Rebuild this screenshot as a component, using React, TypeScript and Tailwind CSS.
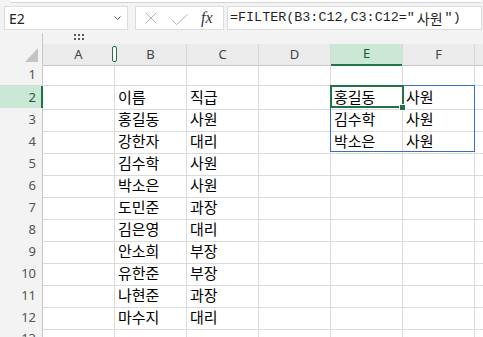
import React from 'react';

const COLUMNS = ['A', 'B', 'C', 'D', 'E', 'F'];

// B/C source table, E/F spilled FILTER result
const sheet: Record<number, Record<string, string>> = {
    2: { B: '이름', C: '직급', E: '홍길동', F: '사원' },
    3: { B: '홍길동', C: '사원', E: '김수학', F: '사원' },
    4: { B: '강한자', C: '대리', E: '박소은', F: '사원' },
    5: { B: '김수학', C: '사원' },
    6: { B: '박소은', C: '사원' },
    7: { B: '도민준', C: '과장' },
    8: { B: '김은영', C: '대리' },
    9: { B: '안소희', C: '부장' },
    10: { B: '유한준', C: '부장' },
    11: { B: '나현준', C: '과장' },
    12: { B: '마수지', C: '대리' },
};

const uiFont = "font-['Noto_Sans','Open_Sans',sans-serif]";
const cellFont = "font-['Noto_Sans_CJK_KR','Noto_Sans',sans-serif]";

const FormulaBar: React.FC = () => (
    <div className="h-[44px] bg-[#f3f3f3] flex flex-col">
        <div className="ml-[10px] mr-[2px] h-[3px] bg-white border-b border-[#d4d4d4] rounded-bl-[4px]" />
        <div className="mt-[3px] h-[24px] flex">
            <div className={`ml-[4px] w-[124px] bg-white border border-[#dcdcdc] flex items-center justify-between pl-[4px] pr-[6px] text-[14px] text-[#222] ${uiFont}`}>
                <span>E2</span>
                <svg width="7" height="4" viewBox="0 0 7 4" fill="none" stroke="#555" strokeWidth="1">
                    <path d="M0.5 0.5 L3.5 3.5 L6.5 0.5" />
                </svg>
            </div>
            <div className="ml-[7px] w-[89px] bg-white border border-[#dcdcdc] flex items-center">
                <svg className="ml-[9px]" width="12" height="12" viewBox="0 0 12 12" stroke="#b4b4b4" strokeWidth="1">
                    <path d="M0.5 0.5 L11.5 11.5 M11.5 0.5 L0.5 11.5" />
                </svg>
                <svg className="ml-[14px] mt-[2px]" width="17" height="11" viewBox="0 0 17 11" fill="none" stroke="#b4b4b4" strokeWidth="1">
                    <path d="M0.5 5.5 L5.5 10.5 L16.5 0.5" />
                </svg>
                <span className="ml-[13px] text-[16px] italic text-[#333] font-['Liberation_Serif',serif] leading-none">fx</span>
            </div>
            <div className="ml-[3px] flex-1 mr-[1px] bg-white border border-[#dcdcdc] flex items-center pl-[2px] text-[13.4px] text-[#1f1f1f] font-['Liberation_Mono','Noto_Sans_CJK_KR',monospace] whitespace-nowrap overflow-hidden">
                =FILTER(B3:C12,C3:C12="<span className="px-[2px] text-[14px] font-['Noto_Sans_CJK_KR',sans-serif]">사원</span>")
            </div>
        </div>
        <div className="flex flex-1">
            <div className="w-[43px] mt-[3px] border-r border-[#c8c8c8]" />
            <div className="ml-[31px] mt-[4px] grid grid-cols-3 gap-[2px] h-[6px]">
                {Array.from({ length: 6 }).map((_, i) => (
                    <span key={i} className="w-[2px] h-[2px] bg-[#5a5a5a]" />
                ))}
            </div>
        </div>
    </div>
);

const ColumnHeaders: React.FC = () => (
    <div className={`grid grid-cols-[43px_repeat(6,72px)_1fr] h-[20px] text-[13px] ${uiFont}`}>
        <div className="bg-[#f3f3f3] border-r border-b border-[#c8c8c8] flex items-end justify-end pr-[3px] pb-[3px]">
            <svg width="14" height="14" viewBox="0 0 14 14">
                <path d="M13 0 L13 14 L0 14 Z" fill="#c4c4c4" />
            </svg>
        </div>
        {COLUMNS.map(c => (
            <div
                key={c}
                className={c === 'E'
                    ? 'bg-[#cae8d5] border-r border-[#d8d8d8] border-b-2 border-b-[#217346] flex items-center justify-center text-[#185c37]'
                    : 'bg-[#ebebeb] border-r border-[#d8d8d8] border-b border-b-[#c8c8c8] flex items-center justify-center text-[#444]'}
            >
                {c}
            </div>
        ))}
        <div className="bg-[#ebebeb] border-b border-[#c8c8c8]" />
    </div>
);

const App: React.FC = () => {
    const rows = Array.from({ length: 13 }, (_, i) => i + 1);

    return (
        <div className="w-[483px] h-[337px] overflow-hidden bg-white relative">
            <FormulaBar />
            <ColumnHeaders />
            <div className="relative">
                {rows.map(r => (
                    <div key={r} className="grid grid-cols-[43px_repeat(6,72px)_1fr] h-[22px]">
                        <div
                            className={r === 2
                                ? `bg-[#cae8d5] border-b border-[#d8d8d8] border-r-2 border-r-[#217346] flex items-center justify-end pr-[5px] text-[13px] text-[#185c37] ${uiFont}`
                                : `bg-[#f3f3f3] border-b border-[#d8d8d8] border-r border-r-[#c8c8c8] flex items-center justify-end pr-[6px] text-[13px] text-[#555] ${uiFont}`}
                        >
                            {r}
                        </div>
                        {COLUMNS.map(c => (
                            <div key={c} className={`border-r border-b border-[#dadada] flex items-center pl-[3px] text-[15px] text-black whitespace-nowrap ${cellFont}`}>
                                {sheet[r]?.[c] ?? ''}
                            </div>
                        ))}
                        <div className="border-b border-[#dadada]" />
                    </div>
                ))}

                {/* spill range E2:F4 */}
                <div className="absolute left-[330px] top-[21px] w-[145px] h-[67px] border border-[#3a6fc4] pointer-events-none" />
                {/* active cell E2 */}
                <div className="absolute left-[330px] top-[21px] w-[74px] h-[23px] border-2 border-[#217346] pointer-events-none" />
                <div className="absolute left-[399px] top-[40px] w-[7px] h-[7px] bg-[#217346] border border-white" />
            </div>

            <div className="absolute left-[112px] top-[46px] w-[5px] h-[16px] rounded-[2px] border border-[#217346] bg-white" />
        </div>
    );
};

export default App;
